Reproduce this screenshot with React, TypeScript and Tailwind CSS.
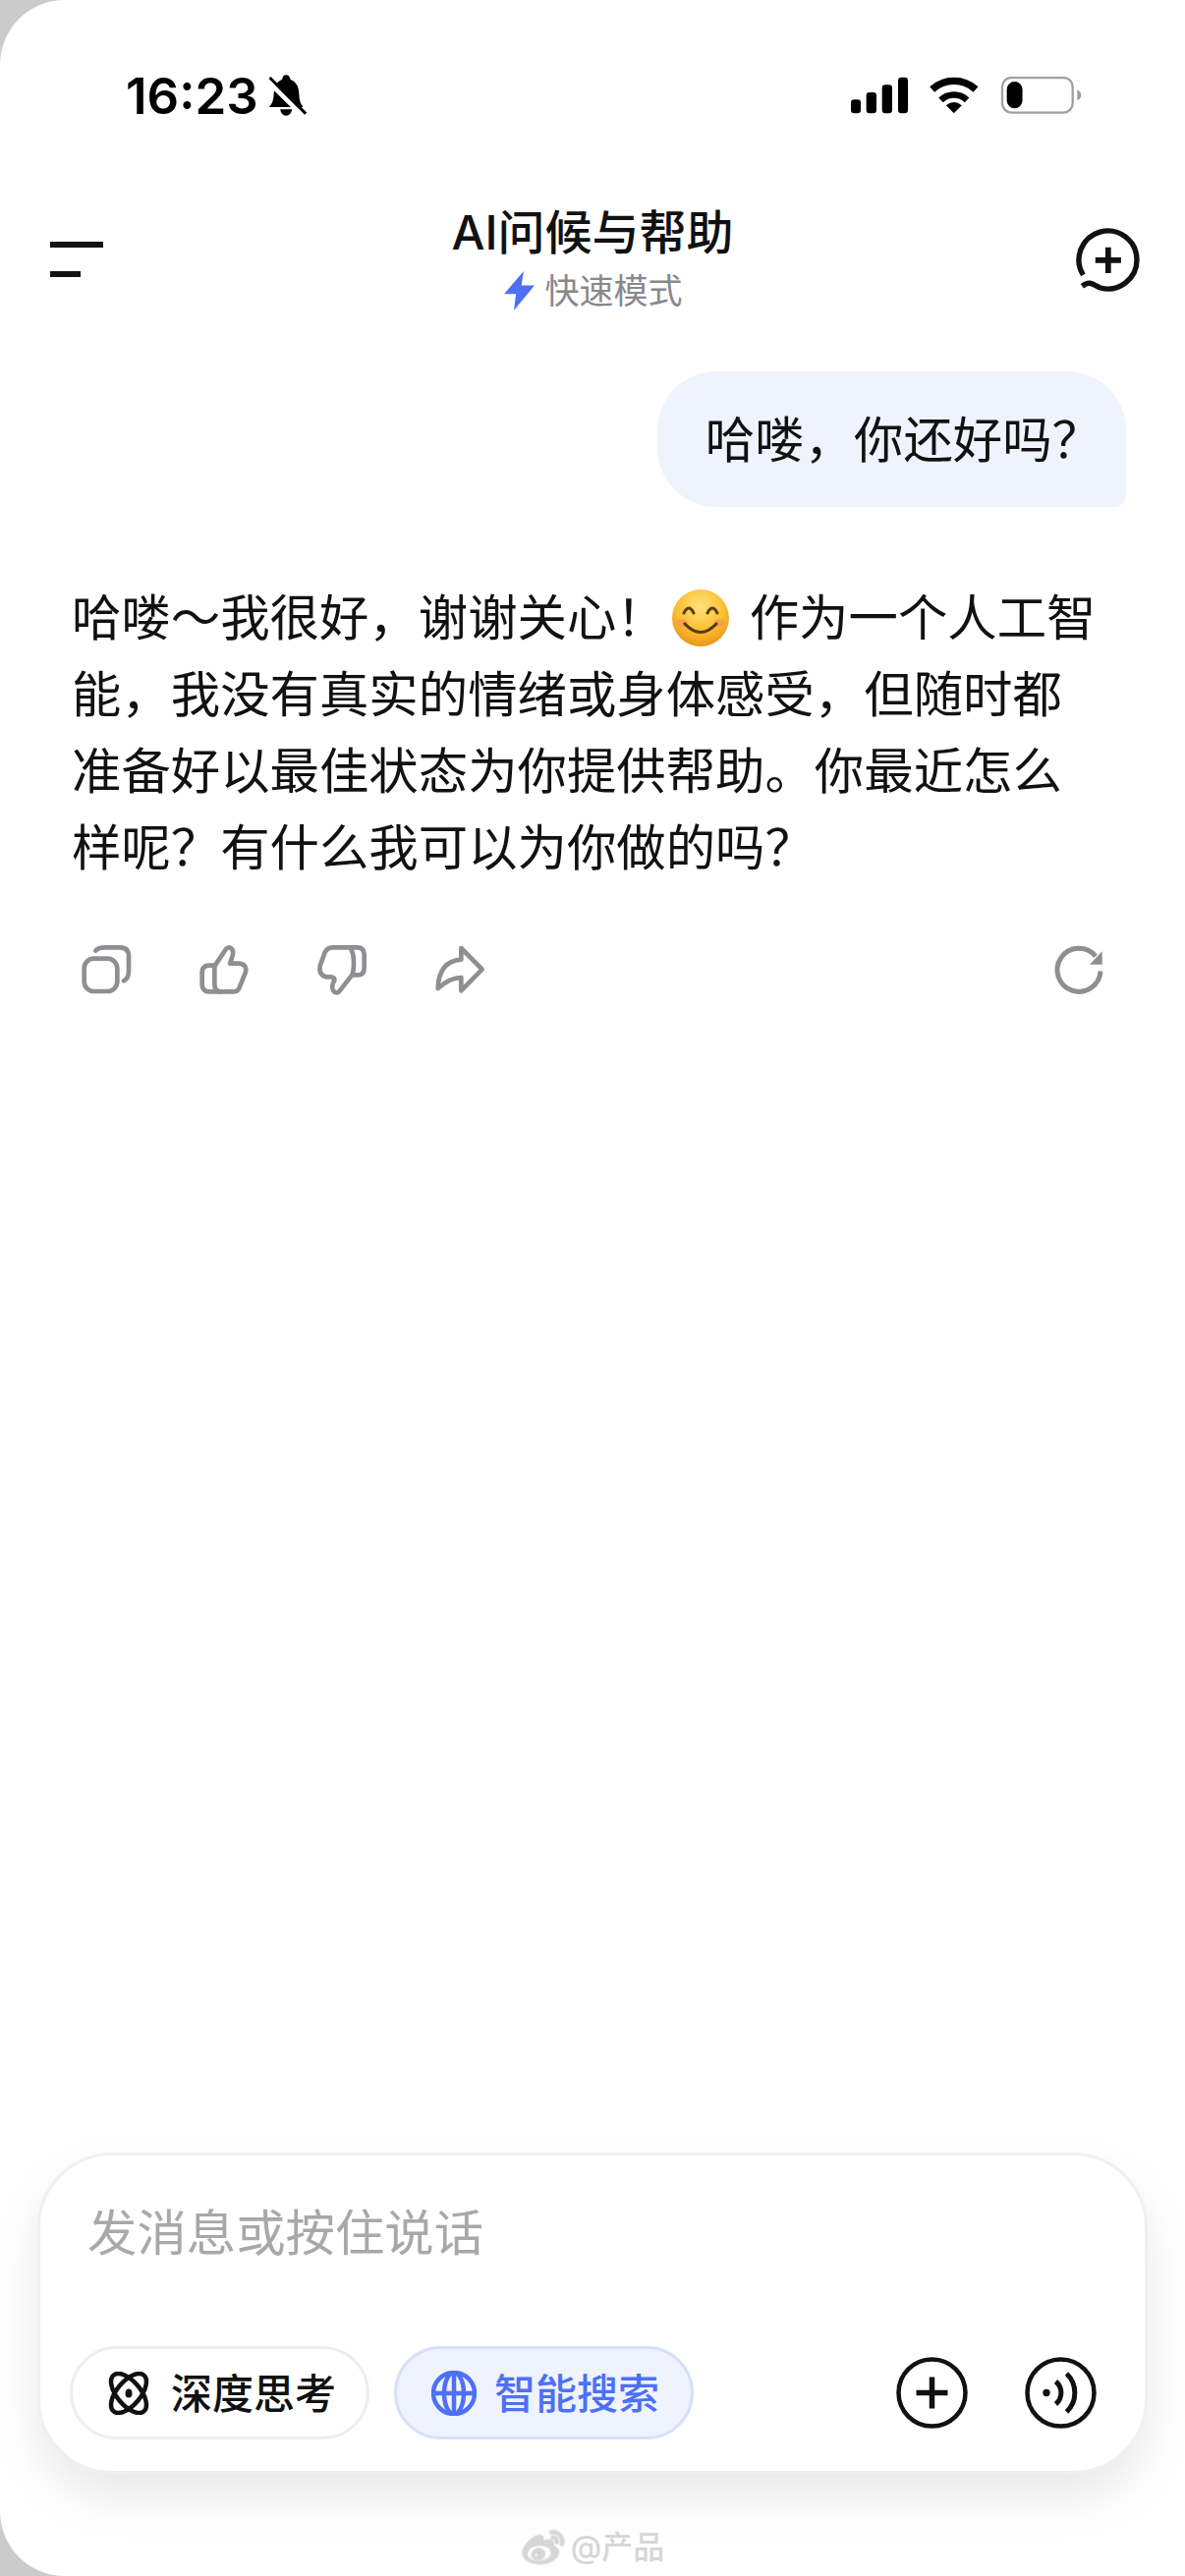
import React from 'react';
import { FaWeibo } from 'react-icons/fa';

function BellOff() {
  return (
    <svg viewBox="820 228 125 132" className="h-[44px] w-[42px]">
      <path d="M880 232 Q890 232 893 245 Q920 255 920 295 Q920 315 932 330 H828 Q842 315 842 295 Q842 255 868 245 Q870 232 880 232 Z" fill="#000" />
      <path d="M862 337 H898 Q895 356 880 356 Q865 356 862 337 Z" fill="#000" />
      <line x1="818" y1="244" x2="932" y2="358" stroke="#fff" strokeWidth="14" />
      <line x1="830" y1="240" x2="940" y2="350" stroke="#000" strokeWidth="9" />
    </svg>
  );
}

function StatusIcons() {
  return (
    <div className="flex items-center gap-[22px]">
      <svg viewBox="75 85 174 114" className="h-[38px] w-[58px]" fill="#000">
        <rect x="75" y="155" width="30" height="42" rx="10" />
        <rect x="122" y="133" width="31" height="64" rx="10" />
        <rect x="170" y="110" width="31" height="87" rx="10" />
        <rect x="219" y="87" width="30" height="110" rx="10" />
      </svg>
      <svg viewBox="316 85 151 114" className="h-[38px] w-[50px]">
        <path d="M324 124 A99 99 0 0 1 458 124" fill="none" stroke="#000" strokeWidth="22" />
        <path d="M351 157 A57 57 0 0 1 431 157" fill="none" stroke="#000" strokeWidth="20" />
        <path d="M391 197 L367 173 Q391 153 415 173 Z" fill="#000" />
      </svg>
      <svg viewBox="532 85 250 114" className="h-[38px] w-[83px]">
        <rect x="538" y="88" width="216" height="107" rx="28" fill="none" stroke="#a0a0a0" strokeWidth="7" />
        <rect x="552" y="100" width="48" height="82" rx="24" fill="#000" />
        <path d="M768 125 Q780 132 780 142 Q780 152 768 158 Z" fill="#9a9a9a" />
      </svg>
    </div>
  );
}

function NewChatIcon() {
  return (
    <svg viewBox="40 30 206 206" className="h-[69px] w-[69px]" fill="none" stroke="#111">
      <path d="M68 176 A88 88 0 1 1 120 215 C100 208 90 190 65 210" strokeWidth="16" />
      <path d="M105 131 H183 M144 92 V170" strokeWidth="17" />
    </svg>
  );
}

function CopyIcon() {
  return (
    <svg viewBox="90 90 180 180" className="h-[60px] w-[60px]" fill="none" stroke="#8e8e93" strokeWidth="14" strokeLinecap="round" strokeLinejoin="round">
      <rect x="107" y="137" width="101" height="100" rx="30" />
      <path d="M142 113 Q150 103 172 103 H215 Q243 103 243 130 V175 Q243 198 228 205" />
    </svg>
  );
}

function ThumbUpIcon() {
  return (
    <svg viewBox="450 90 180 180" className="h-[60px] w-[60px]" fill="none" stroke="#8e8e93" strokeWidth="14" strokeLinecap="round" strokeLinejoin="round">
      <path d="M505 160 L540 108 Q548 98 558 108 Q565 115 558 135 L552 152 H580 Q605 155 600 178 L580 228 Q575 238 565 238 H490 Q467 238 467 215 V180 Q467 158 490 158 H505" />
      <path d="M505 158 V215 Q505 238 525 238" />
    </svg>
  );
}

function ThumbDownIcon() {
  return (
    <svg viewBox="810 90 180 180" className="h-[60px] w-[60px]" fill="none" stroke="#8e8e93" strokeWidth="14" strokeLinecap="round" strokeLinejoin="round">
      <path d="M925 187 H945 Q962 187 962 165 V125 Q962 103 940 103 H865 Q850 103 842 118 L827 160 Q822 185 845 193 H860 Q875 195 870 205 Q860 225 868 235 Q875 245 885 238 L925 187" />
      <path d="M920 105 Q930 120 930 150 Q930 175 925 187" />
    </svg>
  );
}

function ShareIcon() {
  return (
    <svg viewBox="1170 90 180 180" className="h-[60px] w-[60px]" fill="none" stroke="#8e8e93" strokeWidth="14" strokeLinecap="round" strokeLinejoin="round">
      <path d="M1258 105 L1322 170 L1258 235 V195 Q1225 195 1187 228 Q1190 145 1258 140 Z" />
    </svg>
  );
}

function RefreshIcon() {
  return (
    <svg viewBox="30 30 180 180" className="h-[60px] w-[60px]" fill="none">
      <path d="M165 70 A66 66 0 1 0 180 115" stroke="#8e8e93" strokeWidth="15" />
      <path d="M185 55 V95 H147 Z" fill="#8e8e93" />
    </svg>
  );
}

function SmileEmoji() {
  return (
    <svg viewBox="0 0 60 60" className="mr-[20px] ml-[5px] inline-block h-[60px] w-[60px] align-[-12px]">
      <defs>
        <radialGradient id="face" cx="50%" cy="30%" r="75%">
          <stop offset="0%" stopColor="#ffe27a" />
          <stop offset="55%" stopColor="#fbc033" />
          <stop offset="100%" stopColor="#e88f16" />
        </radialGradient>
      </defs>
      <circle cx="30" cy="30" r="29" fill="url(#face)" />
      <ellipse cx="11" cy="35" rx="6" ry="4" fill="#f58a5c" opacity="0.55" />
      <ellipse cx="49" cy="35" rx="6" ry="4" fill="#f58a5c" opacity="0.55" />
      <path d="M13 25 Q18 15 23 25 M37 25 Q42 15 47 25" fill="none" stroke="#5b3a12" strokeWidth="3" strokeLinecap="round" />
      <path d="M14 36 Q30 53 46 36" fill="none" stroke="#5b3a12" strokeWidth="3.2" strokeLinecap="round" />
    </svg>
  );
}

function AtomIcon() {
  return (
    <svg viewBox="0 0 44 44" className="h-[44px] w-[44px]" fill="none" stroke="#111" strokeWidth="4.5">
      <ellipse cx="22" cy="22" rx="24" ry="12" transform="rotate(50 22 22)" />
      <ellipse cx="22" cy="22" rx="24" ry="12" transform="rotate(-50 22 22)" />
      <ellipse cx="22" cy="22" rx="3.5" ry="4.5" fill="#111" stroke="none" />
    </svg>
  );
}

function GlobeIcon() {
  return (
    <svg viewBox="0 0 46 46" className="h-[46px] w-[46px]" fill="none" stroke="#4d70f5" strokeWidth="4.5">
      <circle cx="23" cy="23" r="21" />
      <ellipse cx="23" cy="23" rx="10" ry="21" />
      <path d="M2 23 H44 M23 2 V44" />
    </svg>
  );
}

function PlusCircleIcon() {
  return (
    <svg viewBox="0 0 73 73" className="h-[73px] w-[73px]" fill="none" stroke="#111">
      <circle cx="36.5" cy="36.5" r="34" strokeWidth="4.5" />
      <path d="M20.5 36.5 H52.5 M36.5 20.5 V52.5" strokeWidth="5.5" />
    </svg>
  );
}

function VoiceIcon() {
  return (
    <svg viewBox="0 0 73 73" className="h-[73px] w-[73px]" fill="none" stroke="#111">
      <circle cx="36.5" cy="36.5" r="34" strokeWidth="4.5" />
      <circle cx="22" cy="36.5" r="3.7" fill="#111" stroke="none" />
      <path d="M31.5 25 A15 15 0 0 1 31.5 48" strokeWidth="5" />
      <path d="M42.5 17 A27 27 0 0 1 42.5 56" strokeWidth="5" />
    </svg>
  );
}

export default function App() {
  return (
    <div className="h-[2622px] w-[1206px] overflow-hidden bg-[#cbcbcb] font-[Inter,'Noto_Sans_CJK_SC',sans-serif] text-[#111]">
      <div className="flex h-full flex-col rounded-l-[66px] bg-white">
        {/* status bar */}
        <div className="flex h-[194px] shrink-0 items-center justify-between pr-[105px] pl-[128px]">
          <div className="flex items-center gap-[8px]">
            <span className="text-[51px] leading-none font-semibold text-black">16:23</span>
            <BellOff />
          </div>
          <StatusIcons />
        </div>

        {/* header */}
        <div className="mt-[15px] grid h-[116px] shrink-0 grid-cols-[1fr_auto_1fr] px-[51px]">
          <div className="flex flex-col gap-[24px] pt-[37px]">
            <div className="h-[6px] w-[54px] bg-[#111]" />
            <div className="h-[6px] w-[31px] bg-[#111]" />
          </div>
          <div className="flex flex-col items-center">
            <div className="mb-[2px] text-[48px] leading-[56px] font-medium">AI问候与帮助</div>
            <div className="ml-[2px] flex items-center gap-[10px] leading-[58px]">
              <svg viewBox="0 0 28 36" className="h-[40px] w-[31px]">
                <path d="M18 0 L0 21 H11 L9 36 L28 13 H16 Z" fill="#4d70f5" />
              </svg>
              <span className="text-[35px] text-[#88888d]">快速模式</span>
            </div>
          </div>
          <div className="-mr-[7px] flex justify-end pt-[22px]">
            <NewChatIcon />
          </div>
        </div>

        {/* chat */}
        <div className="flex-1 pt-[53px]">
          <div className="flex justify-end pr-[60px]">
            <div className="rounded-[60px] rounded-br-[12px] bg-[#eff3fe] pt-[31px] pr-[25px] pb-[29px] pl-[49px] text-[50.4px] leading-[78px]">
              哈喽，你还好吗？
            </div>
          </div>
          <div className="mt-[74px] pl-[73px] text-[50.4px] leading-[78px] whitespace-nowrap">
            <div>
              哈喽～我很好，谢谢关心！
              <SmileEmoji />
              作为一个人工智
            </div>
            <div>能，我没有真实的情绪或身体感受，但随时都</div>
            <div>准备好以最佳状态为你提供帮助。你最近怎么</div>
            <div>样呢？有什么我可以为你做的吗？</div>
          </div>
          <div className="mt-[58px] flex items-center pr-[76px] pl-[80px]">
            <div className="flex items-center gap-[60px]">
              <CopyIcon />
              <ThumbUpIcon />
              <ThumbDownIcon />
              <ShareIcon />
            </div>
            <div className="ml-auto">
              <RefreshIcon />
            </div>
          </div>
        </div>

        {/* input card */}
        <div className="mx-[38px] flex h-[327px] shrink-0 flex-col rounded-[76px] border-[3px] border-[#f0f0f0] bg-white shadow-[0_24px_50px_rgba(0,0,0,0.09)]">
          <div className="pt-[49px] pl-[48px] text-[50.4px] leading-[60px] text-[#a8a8a8]">发消息或按住说话</div>
          <div className="mt-auto mb-[32px] flex items-center justify-between pr-[49px] pl-[30px]">
            <div className="flex items-center gap-[25px]">
              <div className="flex h-[95px] w-[305px] items-center gap-[21px] rounded-full border-[3px] border-[#eeeeee] pl-[35px] text-[42px] font-medium">
                <AtomIcon />
                <span className="translate-y-[1px]">深度思考</span>
              </div>
              <div className="flex h-[95px] w-[305px] items-center gap-[18px] rounded-full border-[3px] border-[#d5e1fb] bg-[#eef3fe] pl-[35px] text-[42px] font-medium text-[#4d70f5]">
                <GlobeIcon />
                <span className="translate-y-[1px]">智能搜索</span>
              </div>
            </div>
            <div className="flex items-center gap-[58px]">
              <PlusCircleIcon />
              <VoiceIcon />
            </div>
          </div>
        </div>

        {/* watermark */}
        <div className="flex h-[104px] shrink-0 items-start justify-center gap-[5px] pt-[55px] text-[#d6d6d6]">
          <FaWeibo className="h-[42px] w-[46px] drop-shadow-[0_0_1px_#bbbbbb]" />
          <span className="text-[32px] leading-[40px] font-medium [text-shadow:0_0_2px_#ffffff]">@产品</span>
        </div>
      </div>
    </div>
  );
}
